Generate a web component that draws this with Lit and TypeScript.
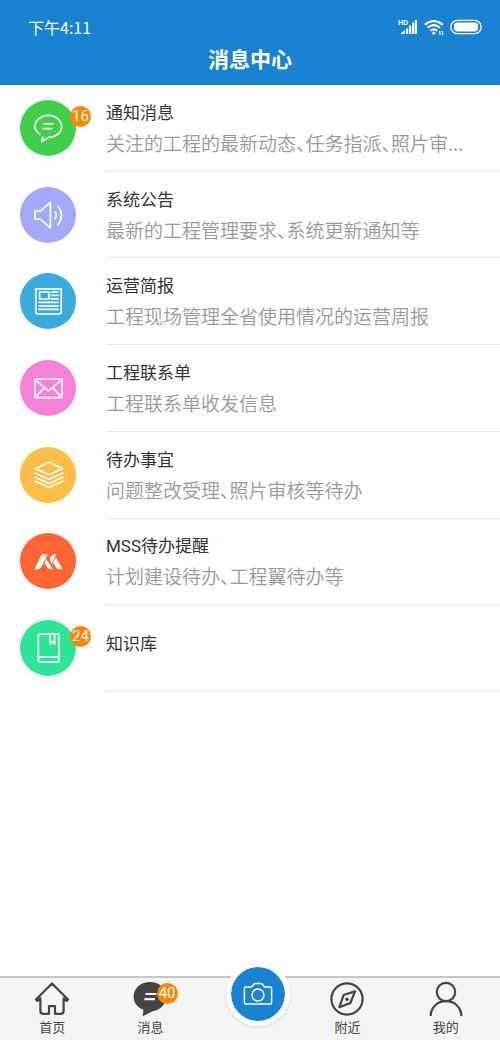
import { LitElement, html, svg, css, nothing } from "lit";
import { customElement, state } from "lit/decorators.js";
import { classMap } from "lit/directives/class-map.js";

interface Message {
  id: string;
  title: string;
  desc?: string;
  badge?: number;
}

const MESSAGES: Message[] = [
  { id: "notice", title: "通知消息", desc: "关注的工程的最新动态、任务指派、照片审...", badge: 16 },
  { id: "announce", title: "系统公告", desc: "最新的工程管理要求、系统更新通知等" },
  { id: "report", title: "运营简报", desc: "工程现场管理全省使用情况的运营周报" },
  { id: "contact", title: "工程联系单", desc: "工程联系单收发信息" },
  { id: "todo", title: "待办事宜", desc: "问题整改受理、照片审核等待办" },
  { id: "mss", title: "MSS待办提醒", desc: "计划建设待办、工程翼待办等" },
  { id: "library", title: "知识库", badge: 24 },
];

const GLYPHS: Record<string, unknown> = {
  notice: svg`
    <path d="M20 34.4C16.800 32.400 15 29.600 15 26.400C15 20.300 21 15.400 28.300 15.400S41.600 20.300 41.600 26.400S35.800 37.200 28.600 37.400L21.800 41.600L22.800 37.200"/>
    <path d="M24.200 23.800H33M23.200 28.600H31.600"/>`,
  announce: svg`
    <path d="M15 24.200H20.300L30.400 15.400V41L20.300 32.200H15Z"/>
    <path d="M35 24.800Q37.600 28.200 35 31.600M38 19.200Q45 28.200 38 38"/>`,
  report: svg`
    <path d="M15.800 15.800H41.200V38.600Q41.200 41 38.800 41H18.200Q15.800 41 15.800 38.600Z"/>
    <path d="M19.600 19H29V26H19.600Z"/>
    <path d="M31.400 19H38M31.400 22.400H38M31.400 25.800H38M19 29.300H38M19 32.800H38M19 36.300H38"/>`,
  contact: svg`
    <rect x="15" y="19" width="27" height="18.600" rx="1"/>
    <path d="M15.400 19.800L28.500 30.800L41.600 19.800M15.600 37L24.400 27.600M41.400 37L32.600 27.600"/>`,
  todo: svg`
    <path d="M29 15.200L42.400 21.400L29 27.800L15.400 21.400Z"/>
    <path d="M15.200 26L29 32.400L42.600 26M15.200 30.200L29 36.600L42.600 30.200M15.200 34.200L29 40.600L42.600 34.200"/>`,
  mss: svg`
    <g fill="#fff" stroke="none">
      <path d="M14.600 36.200L21.200 22.600Q22 21.200 23.600 21.200H27.800L20.800 34.800Q20 36.200 18.400 36.200Z"/>
      <path d="M29.800 25.600Q31.800 21.200 35 21.200H36.400L31.200 31Z"/>
      <path d="M26 25.800L33 36.200H30.600Q28.800 36.200 27.600 34.600L24.800 30.400Z"/>
      <path d="M35.800 24.600L42.600 36.200H38.800Q37 36.200 36.200 34.800L32.800 29.600Z"/>
    </g>`,
  library: svg`
    <path d="M20.400 14.200H38.800V42H20.400Q18.400 42 18.400 40V16.200Q18.400 14.200 20.400 14.200ZM18.600 38.600Q18.800 36.800 20.600 36.800H38.800"/>
    <path d="M30.200 14.400V24.200L32.400 21.600L34.600 24.200V14.400"/>`,
};

interface Tab {
  id: string;
  label: string;
  badge?: number;
}

const TABS_LEFT: Tab[] = [
  { id: "home", label: "首页" },
  { id: "message", label: "消息", badge: 40 },
];
const TABS_RIGHT: Tab[] = [
  { id: "nearby", label: "附近" },
  { id: "mine", label: "我的" },
];

const TAB_GLYPHS: Record<string, unknown> = {
  home: svg`<path d="M2 18.600L18 2.400L34 18.600L32.400 20L29.600 17.400V30Q29.600 32.800 26.800 32.800H21V25.200H15V32.800H9.200Q6.400 32.800 6.400 30V17.400L3.600 20Z"/>`,
  message: svg`
    <path fill="#444" stroke="none" d="M17 1C26 1 33 6.800 33 15.400S26.500 29.200 19.500 30.200L9.800 35.200L10.400 28.800C4.200 26.500 .6 21.500 .6 15.600C.6 7 8 1 17 1Z"/>
    <path stroke="#f4f4f4" d="M12.400 13H23.600M11.400 18.200H22"/>`,
  nearby: svg`
    <circle cx="18" cy="18" r="15.600"/>
    <path d="M26 10.400L21.400 22L10.400 26.200L14.600 14Z"/>
    <circle cx="18" cy="18.200" r="1.700" fill="#444" stroke="none"/>`,
  mine: svg`
    <circle cx="18" cy="11" r="9.200"/>
    <path d="M2.600 35C3 26 9.400 20.200 18 20.200S33 26 33.400 35"/>`,
};

@customElement("app-root")
export class AppRoot extends LitElement {
  @state() private current = "message";

  static styles = css`
    :host {
      display: flex;
      flex-direction: column;
      min-height: 100vh;
      background: #fff;
      color: #333;
      font-family: "Noto Sans CJK SC", "Noto Sans", sans-serif;
    }
    .top {
      background: #1a82d2;
      color: #fff;
      padding: 15px 0 12px;
    }
    .status {
      display: flex;
      justify-content: space-between;
      align-items: center;
      height: 24px;
      padding: 0 18px 0 28px;
      font-size: 16px;
      line-height: 24px;
    }
    .signals {
      display: flex;
      align-items: center;
      gap: 6px;
    }
    .signals svg {
      display: block;
    }
    .hd {
      font: bold 7px "Liberation Sans", sans-serif;
      fill: #fff;
    }
    h1 {
      margin: 5px 0 0;
      font-size: 21px;
      line-height: 29px;
      font-weight: 700;
      text-align: center;
    }
    .list {
      list-style: none;
      margin: 0;
      padding: 0;
      display: grid;
      grid-auto-rows: 1fr;
      min-height: 607px;
    }
    .row {
      display: flex;
      height: 100%;
      align-items: stretch;
      padding-left: 20px;
      gap: 30px;
      color: inherit;
      text-decoration: none;
    }
    .disc {
      position: relative;
      align-self: center;
      flex: none;
      width: 56px;
      height: 56px;
      margin-bottom: 1px;
      border-radius: 50%;
    }
    .disc svg {
      display: block;
      fill: none;
      stroke: #fff;
      stroke-width: 1.7;
      stroke-linecap: round;
      stroke-linejoin: round;
    }
    .notice { background: #40d04e; }
    .announce { background: #a3aafb; }
    .report { background: #3aacdb; }
    .contact { background: #f581d9; }
    .todo { background: #fdbe47; }
    .mss { background: #ff6633; }
    .library { background: #2de596; }
    .badge {
      position: absolute;
      width: 21px;
      height: 21px;
      border-radius: 50%;
      background: #ff8600;
      color: #fff;
      font-family: Roboto, "Noto Sans CJK SC", sans-serif;
      font-size: 15px;
      line-height: 21px;
      text-align: center;
    }
    .disc .badge {
      top: 6px;
      left: 50px;
    }
    .body {
      flex: 1;
      min-width: 0;
      display: flex;
      flex-direction: column;
      justify-content: center;
      padding-top: 2px;
      border-bottom: 1px solid #e8e8e8;
    }
    .single {
      padding: 0 0 8px;
    }
    .title {
      font-family: Roboto, "Noto Sans CJK SC", sans-serif;
      font-size: 17px;
      line-height: 28px;
    }
    .desc {
      font-size: 19px;
      line-height: 32px;
      font-weight: 350;
      color: #999;
      white-space: nowrap;
      overflow: hidden;
      text-overflow: ellipsis;
      font-feature-settings: "halt";
    }
    .tabs {
      position: relative;
      margin-top: auto;
      display: grid;
      grid-template-columns: repeat(5, 1fr);
      padding: 3px 5px 4px 3px;
      border-top: 2px solid #c6c6c6;
      background: #f4f4f4;
    }
    button {
      border: 0;
      padding: 0;
      background: none;
      font-family: inherit;
      cursor: pointer;
    }
    .tab {
      display: flex;
      flex-direction: column;
      align-items: center;
      color: #444;
      font-size: 13px;
      line-height: 19px;
    }
    .mark {
      position: relative;
    }
    .mark svg {
      display: block;
      fill: none;
      stroke: #444;
      stroke-width: 2.2;
      stroke-linejoin: round;
    }
    .mark .badge {
      top: 2px;
      left: 24px;
    }
    .right {
      grid-column: 4;
    }
    .camera {
      position: absolute;
      top: -16px;
      left: calc(50% - 24px);
      width: 64px;
      height: 64px;
      border: 5px solid #fff;
      border-radius: 50%;
      background: #1a82d2;
      background-clip: padding-box;
      box-shadow: 0 1px 3px rgba(0, 0, 0, 0.12);
    }
    .camera svg {
      display: block;
      margin: 0 auto;
      fill: none;
      stroke: #fff;
      stroke-width: 1.5;
      stroke-linejoin: round;
    }
  `;

  private renderRow(m: Message) {
    return html`<li>
      <a class="row" href="#${m.id}">
        <span class="disc ${m.id}">
          <svg width="56" height="56" viewBox="0 0 56 56" aria-hidden="true">${GLYPHS[m.id]}</svg>
          ${m.badge ? html`<span class="badge">${m.badge}</span>` : nothing}
        </span>
        <span class=${classMap({ body: true, single: !m.desc })}>
          <span class="title">${m.title}</span>
          ${m.desc ? html`<span class="desc">${m.desc}</span>` : nothing}
        </span>
      </a>
    </li>`;
  }

  private renderTab(t: Tab, right = false) {
    return html`<button
      type="button"
      class=${classMap({ tab: true, right })}
      aria-current=${this.current === t.id ? "page" : "false"}
      @click=${() => (this.current = t.id)}
    >
      <span class="mark">
        <svg width="36" height="36" viewBox="0 0 36 36" aria-hidden="true">${TAB_GLYPHS[t.id]}</svg>
        ${t.badge ? html`<span class="badge">${t.badge}</span>` : nothing}
      </span>
      <span>${t.label}</span>
    </button>`;
  }

  render() {
    return html`
      <header class="top">
        <div class="status">
          <span>下午4:11</span>
          <span class="signals">
            <svg width="20" height="18" viewBox="0 0 20 18" aria-hidden="true">
              <text class="hd" x="0" y="7">HD</text>
              <path fill="#fff" d="M2.600 16L6.800 11.800V16ZM8 10.400h2.200v5.600H8ZM11 7.400h2.200v8.600h-2.200ZM14 4.600h2.200v11.400h-2.200ZM16.800 2h2.200v14h-2.200Z" />
            </svg>
            <svg width="20" height="18" viewBox="0 0 20 18" aria-hidden="true" fill="none" stroke="#fff" stroke-width="2.100">
              <path d="M.8 6.800Q9.800 -.8 18.800 6.800M3.600 9.800Q9.800 4.600 16 9.800M6.400 12.600Q9.800 10 13.200 12.600" />
              <circle cx="9.800" cy="15" r="1.600" fill="#fff" stroke="none" />
              <path stroke-width="1" d="M16 13v4M18.400 13v4M15 14.400l1-1.400M18.400 17l1-1.400" />
            </svg>
            <svg width="32" height="16" viewBox="0 0 32 16" aria-hidden="true">
              <rect x=".8" y="1.300" width="30.400" height="13.400" rx="6.700" fill="none" stroke="#fff" stroke-width="1.300" />
              <rect x="4" y="3.600" width="24" height="8.800" rx="3.400" fill="#fff" />
            </svg>
          </span>
        </div>
        <h1>消息中心</h1>
      </header>
      <ul class="list">
        ${MESSAGES.map((m) => this.renderRow(m))}
      </ul>
      <nav class="tabs">
        ${TABS_LEFT.map((t) => this.renderTab(t))}
        ${TABS_RIGHT.map((t, i) => this.renderTab(t, i === 0))}
        <button type="button" class="camera" aria-label="拍照">
          <svg width="30" height="24" viewBox="0 0 30 24" aria-hidden="true">
            <path d="M3 5H7.500Q9 5 9.800 3.600Q11 1.600 12.400 1.600H18Q19.400 1.600 20.400 3.600Q21 5 22.600 5H27Q28.600 5 28.600 6.600V20.400Q28.600 22 27 22H3Q1.400 22 1.400 20.400V6.600Q1.400 5 3 5Z" />
            <circle cx="15" cy="13" r="6" />
          </svg>
        </button>
      </nav>
    `;
  }
}
